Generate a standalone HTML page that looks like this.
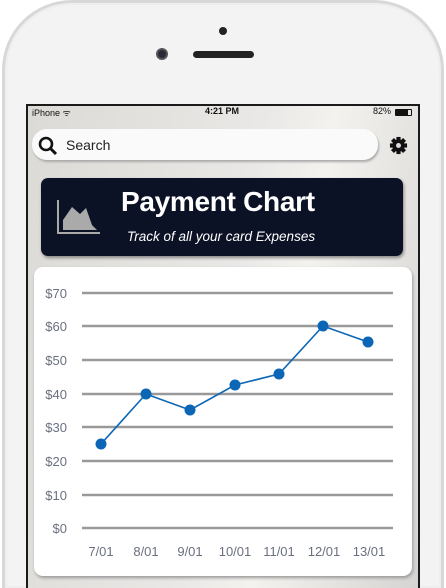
<!DOCTYPE html><html><head><style>
*{margin:0;padding:0;box-sizing:border-box}
html{width:446px;height:588px;overflow:hidden}
body{width:446px;height:588px;overflow:hidden;background:#fff;font-family:"Liberation Sans",sans-serif;position:relative}
.phone{position:absolute;left:2px;top:0;width:442px;height:588px;border-radius:70px 70px 0 0;background:#f3f3f3;border:3px solid #d8d8d8;border-bottom:none;box-shadow:inset 0 0 0 2px #eee}
.screen{position:absolute;left:26px;top:104px;width:394px;height:484px;background:linear-gradient(100deg,#dcdad6 0%,#e9e8e6 50%,#f4f2ef 65%,#d6d4d2 100%);border:2px solid #1a1a1a;border-bottom:none}
.abs{position:absolute}
</style></head><body>
<div class="phone"></div>
<div class="abs" style="left:219px;top:27px;width:8px;height:8px;border-radius:50%;background:#222"></div>
<div class="abs" style="left:156px;top:48px;width:12px;height:12px;border-radius:50%;background:#2a2a3a;border:2px solid #555"></div>
<div class="abs" style="left:193px;top:51px;width:61px;height:7px;border-radius:4px;background:#222"></div>
<div class="screen"></div>
<div class="abs" style="left:32px;top:106px;font-size:9px;color:#111">iPhone ᯤ</div>
<div class="abs" style="left:205px;top:106px;font-size:9px;color:#111;font-weight:bold">4:21 PM</div>
<div class="abs" style="left:373px;top:106px;font-size:9px;color:#111">82%</div>
<div class="abs" style="left:395px;top:109px;width:17px;height:7px;border:1px solid #111;border-radius:1px"><div style="width:80%;height:100%;background:#111"></div></div>
<div class="abs" style="left:32px;top:129px;width:346px;height:31px;border-radius:15px;background:#fafafa;box-shadow:1px 2px 2px #aaa"></div>
<svg class="abs" style="left:37px;top:135px" width="22" height="22" viewBox="0 0 22 22"><circle cx="9" cy="9" r="6" fill="none" stroke="#111" stroke-width="2.6"/><line x1="13" y1="13" x2="19" y2="19" stroke="#111" stroke-width="3"/></svg>
<div class="abs" style="left:66px;top:137px;font-size:14px;color:#222">Search</div>
<svg class="abs" style="left:389px;top:136px" width="19" height="19" viewBox="0 0 20 20"><g fill="#111" transform="translate(10 10)"><rect x="-2.2" y="-9" width="4.4" height="18"/><rect x="-2.2" y="-9" width="4.4" height="18" transform="rotate(45)"/><rect x="-2.2" y="-9" width="4.4" height="18" transform="rotate(90)"/><rect x="-2.2" y="-9" width="4.4" height="18" transform="rotate(135)"/><circle r="6.5"/></g><circle cx="10" cy="10" r="2.6" fill="#ddd"/></svg>
<div class="abs" style="left:41px;top:178px;width:362px;height:78px;border-radius:7px;background:#0c1226;box-shadow:1px 2px 3px #888"></div>
<svg class="abs" style="left:56px;top:200px" width="45" height="35" viewBox="0 0 45 35"><path d="M2 0V33H44" fill="none" stroke="#aaa" stroke-width="2"/><path d="M7 30V20L16 7L24 14L30 8L36 25L41 30Z" fill="#aaa"/></svg>
<div class="abs" style="left:121px;top:186px;font-size:28px;font-weight:bold;color:#fff;letter-spacing:-0.3px">Payment Chart</div>
<div class="abs" style="left:127px;top:229px;font-size:13.5px;font-style:italic;color:#fff">Track of all your card Expenses</div>
<div class="abs" style="left:34px;top:267px;width:378px;height:309px;border-radius:9px;background:#fff;box-shadow:1px 2px 3px #999"></div>
<svg class="abs" style="left:0;top:0" width="446" height="588">
<g stroke="#999" stroke-width="2.5">
<line x1="82" x2="393" y1="293" y2="293"/><line x1="82" x2="393" y1="326" y2="326"/><line x1="82" x2="393" y1="360" y2="360"/><line x1="82" x2="393" y1="394" y2="394"/><line x1="82" x2="393" y1="427" y2="427"/><line x1="82" x2="393" y1="461" y2="461"/><line x1="82" x2="393" y1="495" y2="495"/><line x1="82" x2="393" y1="528" y2="528"/></g>
<g font-family="Liberation Sans" font-size="13" fill="#6b7080" text-anchor="end">
<text x="67" y="298">$70</text><text x="67" y="331">$60</text><text x="67" y="365">$50</text><text x="67" y="399">$40</text><text x="67" y="432">$30</text><text x="67" y="466">$20</text><text x="67" y="500">$10</text><text x="67" y="533">$0</text></g>
<g font-family="Liberation Sans" font-size="13" fill="#6b7080" text-anchor="middle">
<text x="101" y="556">7/01</text><text x="146" y="556">8/01</text><text x="190" y="556">9/01</text><text x="235" y="556">10/01</text><text x="279" y="556">11/01</text><text x="324" y="556">12/01</text><text x="369" y="556">13/01</text></g>
<polyline points="101,444 146,394 190,410 235,385 279,374 323,326 368,342" fill="none" stroke="#0b66b5" stroke-width="1.6"/>
<g fill="#0b66b5"><circle cx="101" cy="444" r="5.5"/><circle cx="146" cy="394" r="5.5"/><circle cx="190" cy="410" r="5.5"/><circle cx="235" cy="385" r="5.5"/><circle cx="279" cy="374" r="5.5"/><circle cx="323" cy="326" r="5.5"/><circle cx="368" cy="342" r="5.5"/></g>
</svg>
</body></html>
